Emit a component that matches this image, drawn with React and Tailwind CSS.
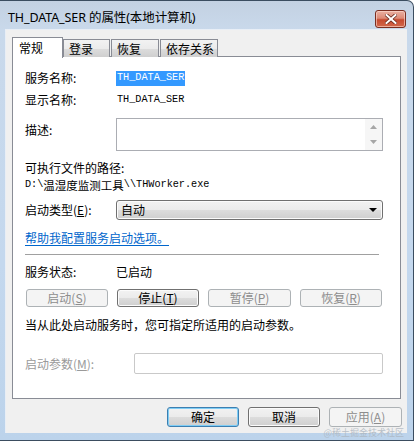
import React from 'react';

const cjk = "font-['Noto_Sans_CJK_SC',sans-serif]";
const mono = "font-['Liberation_Mono','Noto_Sans_CJK_SC',monospace] text-[10.2px]";

function CloseButton() {
  return (
    <div className="mt-[9px] mr-[7px] w-[31px] h-[18px] rounded-[3px] border border-[#7a2e21] bg-[linear-gradient(180deg,#eab0a2_0%,#dd8a76_45%,#c64a30_55%,#d2684c_100%)] shadow-[inset_0_0_0_1px_rgba(255,220,210,0.6)] flex items-center justify-center">
      <svg width="12" height="10" viewBox="0 0 12 10">
        <path d="M1.5 1 L10.5 9 M10.5 1 L1.5 9" stroke="#6b2a1f" strokeWidth="3.6" strokeLinecap="square" />
        <path d="M1.5 1 L10.5 9 M10.5 1 L1.5 9" stroke="#ffffff" strokeWidth="2" strokeLinecap="square" />
      </svg>
    </div>
  );
}

function Tab({ label, active, className }) {
  if (active) {
    return (
      <div className={`relative z-10 h-[21px] -mb-px bg-white border border-b-0 border-[#898c95] pl-[6px] flex items-center ${className}`}>
        {label}
      </div>
    );
  }
  return (
    <div className={`h-[18px] border border-b-0 border-[#898c95] bg-[linear-gradient(180deg,#f2f2f2_0%,#ebebeb_50%,#dddddd_50%,#cfcfcf_100%)] pl-[5px] flex items-center ${className}`}>
      {label}
    </div>
  );
}

function Btn({ children, disabled, primary, className = '' }) {
  let look = 'border-[#707070] text-black bg-[linear-gradient(180deg,#f2f2f2_0%,#ebebeb_50%,#dddddd_50%,#cfcfcf_100%)] shadow-[inset_0_0_0_1px_#fbfbfb]';
  if (disabled) look = 'border-[#adb2b5] text-[#8d8d8d] bg-[#f4f4f4]';
  if (primary) look = 'border-[#3c7fb1] text-black bg-[linear-gradient(180deg,#f2f2f2_0%,#ebebeb_50%,#dddddd_50%,#cfcfcf_100%)] shadow-[inset_0_0_0_1px_#7fcdf5]';
  return (
    <div className={`flex items-center justify-center rounded-[3px] border leading-[16px] ${look} ${className}`}>
      {children}
    </div>
  );
}

export default function App() {
  return (
    <div className={`w-[418px] h-[445px] bg-white overflow-hidden text-[12px] text-black ${cjk}`}>
      <div className="relative w-[414px] h-[441px] border-t border-r border-b border-[#3b4d60] rounded-tr-[7px] bg-[linear-gradient(180deg,#c3d1e2_0%,#c9d9eb_29px,#c4d8ee_60%,#bcd3eb_100%)] flex flex-col">
        {/* title bar */}
        <div className="h-[28px] flex items-start">
          <div className="pl-[8px] pt-[9px] leading-[16px] text-[12.5px] font-['Noto_Sans','Noto_Sans_CJK_SC',sans-serif] tracking-[-0.1px]">
            TH_DATA_SER 的属性(本地计算机)
          </div>
          <div className="ml-auto">
            <CloseButton />
          </div>
        </div>

        {/* client area */}
        <div className="ml-[5px] w-[402px] h-[404px] bg-[#f0f0f0] border-l border-t border-[#e8eef6] pt-[6px] pl-[6px]">
          {/* tabs */}
          <div className="flex items-end h-[21px] -mb-px">
            <Tab label="常规" active className="w-[51px]" />
            <Tab label="登录" className="w-[47px]" />
            <Tab label="恢复" className="w-[48px] ml-px" />
            <Tab label="依存关系" className="w-[58px] ml-px" />
          </div>

          {/* panel */}
          <div className="w-[389px] h-[343px] bg-white border border-[#898c95] pl-[12px] flex flex-col">
            <div className="mt-[13px] h-[16px] flex items-center">
              <div className="w-[91px]">服务名称:</div>
              <div className={`bg-[#3399ff] text-white h-[15px] flex items-center px-[1px] ${mono}`}>TH_DATA_SER</div>
            </div>

            <div className="mt-[6px] h-[16px] flex items-center">
              <div className="w-[91px]">显示名称:</div>
              <div className={`px-[1px] ${mono}`}>TH_DATA_SER</div>
            </div>

            <div className="mt-[10px] flex">
              <div className="w-[91px] pt-[4px] leading-[16px]">描述:</div>
              <div className="w-[267px] h-[33px] border border-[#abadb3] bg-white flex justify-end">
                <div className="w-[17px] h-full bg-[#f6f6f6] flex flex-col items-center justify-between py-[6px]">
                  <svg width="7" height="4" viewBox="0 0 7 4"><path d="M3.5 0 L7 4 L0 4 Z" fill="#a6a6a6" /></svg>
                  <svg width="7" height="4" viewBox="0 0 7 4"><path d="M0 0 L7 0 L3.5 4 Z" fill="#a6a6a6" /></svg>
                </div>
              </div>
            </div>

            <div className="mt-[10px] h-[14px] leading-[14px] flex items-center">可执行文件的路径:</div>
            <div className="mt-[3px] h-[14px] leading-[14px] flex items-center">
              <span className={mono}>{'D:\\'}</span>
              <span className="text-[11.5px]">温湿度监测工具</span>
              <span className={mono}>{'\\\\THWorker.exe'}</span>
            </div>

            <div className="mt-[8px] h-[20px] flex items-center">
              <div className="w-[91px]">启动类型(<span className="underline">E</span>):</div>
              <div className="w-[267px] h-[20px] rounded-[3px] border border-[#707070] bg-[linear-gradient(180deg,#f2f2f2_0%,#ebebeb_50%,#dddddd_50%,#cfcfcf_100%)] shadow-[inset_0_0_0_1px_#fbfbfb] flex items-center pl-[4px] pr-[5px]">
                <span className="leading-[16px]">自动</span>
                <svg className="ml-auto" width="8" height="4" viewBox="0 0 8 4"><path d="M0 0 L8 0 L4 4 Z" fill="#000" /></svg>
              </div>
            </div>

            <div className="mt-[10px] h-[16px] flex items-center">
              <span className="text-[#0066cc] underline underline-offset-2">帮助我配置服务启动选项。</span>
            </div>

            <div className="mt-[8px] w-[354px] border-t border-[#a0a0a0]" />

            <div className="mt-[9px] h-[16px] flex items-center">
              <div className="w-[91px]">服务状态:</div>
              <div>已启动</div>
            </div>

            <div className="mt-[9px] flex gap-[9px] pl-[1px]">
              <Btn disabled className="w-[82px] h-[18px]">启动(<span className="underline">S</span>)</Btn>
              <Btn className="w-[82px] h-[18px]">停止(<span className="underline">T</span>)</Btn>
              <Btn disabled className="w-[83px] h-[18px]">暂停(<span className="underline">P</span>)</Btn>
              <Btn disabled className="w-[82px] h-[18px]">恢复(<span className="underline">R</span>)</Btn>
            </div>

            <div className="mt-[10px] h-[16px] flex items-center">当从此处启动服务时，您可指定所适用的启动参数。</div>

            <div className="mt-[20px] h-[21px] flex items-center">
              <div className="w-[109px] text-[#9a9a9a]">启动参数(<span className="underline">M</span>):</div>
              <div className="w-[249px] h-[21px] border border-[#c9c9c9] rounded-[2px] bg-white" />
            </div>
          </div>

          {/* dialog buttons */}
          <div className="mt-[8px] flex justify-end gap-[9px] pr-[5px]">
            <Btn primary className="w-[72px] h-[20px]">确定</Btn>
            <Btn className="w-[72px] h-[20px]">取消</Btn>
            <Btn disabled className="w-[73px] h-[20px]">应用(<span className="underline">A</span>)</Btn>
          </div>
        </div>

        <div className="absolute right-[9px] top-[427px] text-[9px] leading-[10px] text-[#aab3bd]/80">@稀土掘金技术社区</div>
      </div>
    </div>
  );
}
